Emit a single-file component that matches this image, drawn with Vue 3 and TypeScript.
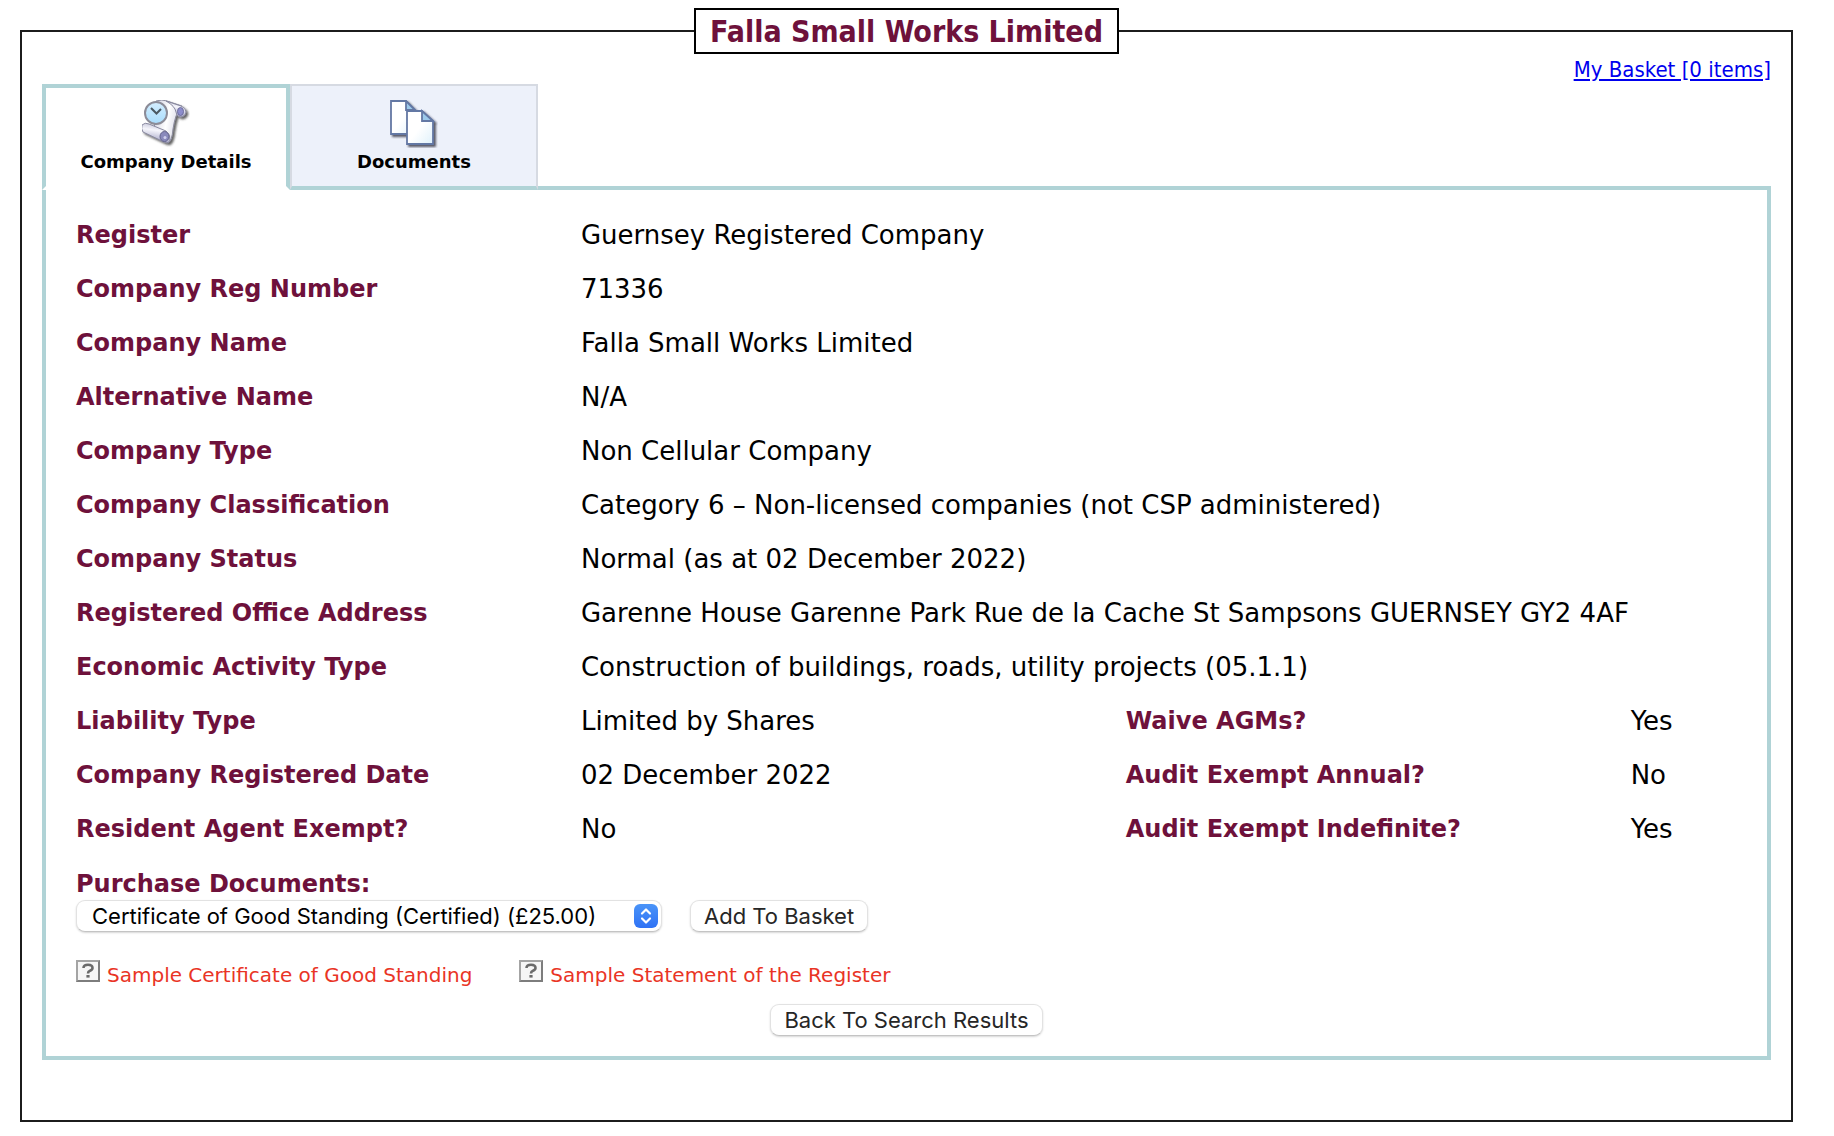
<script setup lang="ts">
import { ref } from 'vue'

interface DetailRow {
  label: string
  value: string
  extra?: { label: string; value: string }
}

const companyName = 'Falla Small Works Limited'

const rows: DetailRow[] = [
  { label: 'Register', value: 'Guernsey Registered Company' },
  { label: 'Company Reg Number', value: '71336' },
  { label: 'Company Name', value: companyName },
  { label: 'Alternative Name', value: 'N/A' },
  { label: 'Company Type', value: 'Non Cellular Company' },
  { label: 'Company Classification', value: 'Category 6 – Non-licensed companies (not CSP administered)' },
  { label: 'Company Status', value: 'Normal (as at 02 December 2022)' },
  { label: 'Registered Office Address', value: 'Garenne House Garenne Park Rue de la Cache St Sampsons GUERNSEY GY2 4AF' },
  { label: 'Economic Activity Type', value: 'Construction of buildings, roads, utility projects (05.1.1)' },
  { label: 'Liability Type', value: 'Limited by Shares', extra: { label: 'Waive AGMs?', value: 'Yes' } },
  { label: 'Company Registered Date', value: '02 December 2022', extra: { label: 'Audit Exempt Annual?', value: 'No' } },
  { label: 'Resident Agent Exempt?', value: 'No', extra: { label: 'Audit Exempt Indefinite?', value: 'Yes' } },
]

const purchaseOptions = ['Certificate of Good Standing (Certified) (£25.00)']
const selected = ref(purchaseOptions[0])

const samples = ['Sample Certificate of Good Standing', 'Sample Statement of the Register']
</script>

<template>
  <main class="page">
    <fieldset class="frame">
      <legend class="title">{{ companyName }}</legend>

      <div class="basket"><a href="#">My Basket [0 items]</a></div>

      <div class="tabs" role="tablist">
        <button class="tab tab-active" type="button" role="tab" aria-selected="true">
          <svg class="tab-icon" viewBox="0 0 48 48" aria-hidden="true">
            <defs>
              <linearGradient id="paper" x1="0" y1="0" x2="1" y2="0.3">
                <stop offset="0" stop-color="#c9c9da" />
                <stop offset="0.55" stop-color="#ffffff" />
                <stop offset="1" stop-color="#d4d4e2" />
              </linearGradient>
              <linearGradient id="roll" x1="0.5" y1="0" x2="0.3" y2="1">
                <stop offset="0" stop-color="#c4c4d8" />
                <stop offset="0.35" stop-color="#f6f6fc" />
                <stop offset="1" stop-color="#9c9cc0" />
              </linearGradient>
              <linearGradient id="glass" x1="0" y1="0" x2="0" y2="1">
                <stop offset="0" stop-color="#d4eeff" />
                <stop offset="1" stop-color="#a8dcfc" />
              </linearGradient>
              <filter id="soft" x="-20%" y="-20%" width="150%" height="150%">
                <feDropShadow dx="2" dy="2" stdDeviation="1.2" flood-color="#333" flood-opacity="0.75" />
              </filter>
            </defs>
            <g filter="url(#soft)">
              <path d="M14 1 Q20 -1 25 1 L40 6 L34 16 Q32 22 31 29 Q30 41 26 43 L12 34 Z" fill="url(#paper)" stroke="#8c8c9e" />
              <path d="M24 1 L39 6 Q44 8 44 12 Q43 17 38 17 Q34 16 34 12 Q33 6 24 1 Z" fill="url(#roll)" stroke="#8a8aa0" />
              <ellipse cx="38.5" cy="11.5" rx="3" ry="4" fill="#8c8ccc" stroke="#6c6c9c" />
              <path d="M0 25 Q3 22 7 24 L24 31 Q29 35 28 40 Q27 44 22 42 L1 32 Q-1 29 0 25 Z" fill="url(#roll)" stroke="#8a8aa0" />
              <ellipse cx="22.5" cy="36.5" rx="4.5" ry="5" fill="#8a8abc" stroke="#62628a" />
              <circle cx="23" cy="37.5" r="1.5" fill="#d0d0ee" />
            </g>
            <circle cx="14" cy="13" r="11" fill="url(#glass)" stroke="#8c8c98" stroke-width="2" />
            <path d="M9 8 L14.5 13.5 L19 9" fill="none" stroke="#4a5862" stroke-width="2" />
          </svg>
          <span>Company Details</span>
        </button>
        <button class="tab" type="button" role="tab" aria-selected="false">
          <svg class="tab-icon" viewBox="0 0 48 48" aria-hidden="true">
            <defs>
              <linearGradient id="sheet" x1="0" y1="0" x2="1" y2="1">
                <stop offset="0" stop-color="#ffffff" />
                <stop offset="0.5" stop-color="#ffffff" />
                <stop offset="1" stop-color="#dff1fb" />
              </linearGradient>
              <filter id="lift" x="-20%" y="-20%" width="150%" height="150%">
                <feDropShadow dx="2" dy="2" stdDeviation="1" flood-color="#223" flood-opacity="0.75" />
              </filter>
            </defs>
            <g filter="url(#lift)" stroke="#6478a4" stroke-width="1.8">
              <path d="M1 1 H16 L25 10 V34 H1 Z" fill="url(#sheet)" />
              <path d="M16 1 V10 H25 Z" fill="#9cc9ea" />
            </g>
            <g filter="url(#lift)" stroke="#6478a4" stroke-width="1.8">
              <path d="M17 11 H32 L43 21 V44 H17 Z" fill="url(#sheet)" />
              <path d="M32 11 V21 H43 Z" fill="#9cc9ea" />
            </g>
          </svg>
          <span>Documents</span>
        </button>
        <div class="tab-rest"></div>
      </div>

      <section class="panel">
        <table class="details">
          <colgroup>
            <col class="col-label" />
            <col class="col-value" />
            <col class="col-label" />
            <col />
          </colgroup>
          <tbody>
            <tr v-for="row in rows" :key="row.label">
              <th scope="row">{{ row.label }}</th>
              <td :colspan="row.extra ? 1 : 3">{{ row.value }}</td>
              <template v-if="row.extra">
                <th scope="row">{{ row.extra.label }}</th>
                <td>{{ row.extra.value }}</td>
              </template>
            </tr>
          </tbody>
        </table>

        <label class="purchase-label" for="purchase">Purchase Documents:</label>
        <div class="purchase">
          <div class="picker">
            <select id="purchase" v-model="selected">
              <option v-for="o in purchaseOptions" :key="o" :value="o">{{ o }}</option>
            </select>
            <svg class="picker-arrows" viewBox="0 0 24 24" aria-hidden="true">
              <defs>
                <linearGradient id="blue" x1="0" y1="0" x2="0" y2="1">
                  <stop offset="0" stop-color="#4a94f8" />
                  <stop offset="1" stop-color="#2f72f5" />
                </linearGradient>
              </defs>
              <rect width="24" height="24" rx="6" fill="url(#blue)" />
              <path d="M8 9.5 L12 5.5 L16 9.5 M8 14.5 L12 18.5 L16 14.5" fill="none" stroke="#fff" stroke-width="2.2" stroke-linecap="round" stroke-linejoin="round" />
            </svg>
          </div>
          <button class="push" type="button">Add To Basket</button>
        </div>

        <div class="samples">
          <a v-for="s in samples" :key="s" class="sample" href="#">
            <svg class="sample-icon" viewBox="0 0 24 22" aria-hidden="true">
              <rect width="24" height="22" fill="#7d7d7d" />
              <path d="M0 0 H24 L22 2 H2 V20 L0 22 Z" fill="#a4a4a4" />
              <rect x="2" y="2" width="20" height="18" fill="#f6f6f6" />
              <path d="M7.5 8 Q7.5 4.8 12 4.8 Q16.5 4.8 16.5 8 Q16.5 9.8 14 10.8 Q12 11.6 12 13.4" fill="none" stroke="#6a6a6a" stroke-width="2.6" />
              <rect x="10.4" y="15" width="3.2" height="2.6" fill="#6a6a6a" />
            </svg>
            <span>{{ s }}</span>
          </a>
        </div>

        <div class="back">
          <button class="push" type="button">Back To Search Results</button>
        </div>
      </section>
    </fieldset>
  </main>
</template>

<style>
body {
  background: #fff;
}
</style>

<style scoped>
.page {
  padding: 8px 41px 14px 20px;
  font-family: "DejaVu Sans", Verdana, sans-serif;
  color: #000;
}

.frame {
  margin: 0;
  padding: 0 20px 60px;
  border: 2px solid #1c1c1c;
  min-width: 0;
}

.title {
  margin: 0 auto;
  padding: 2px 14px 0;
  border: 2px solid #000;
  font: bold 30px/40px "DejaVu Sans Condensed", Tahoma, sans-serif;
  color: #6e113b;
}

.basket {
  padding-top: 2px;
  text-align: right;
  font: 22px/28px "DejaVu Sans Condensed", Tahoma, sans-serif;
}

.basket a {
  color: #0000ee;
}

.tabs {
  display: flex;
}

.tab {
  display: flex;
  flex-direction: column;
  align-items: center;
  box-sizing: border-box;
  width: 248px;
  height: 106px;
  margin: 0;
  padding: 14px 0 0;
  border: 2px solid #d6dae2;
  border-bottom: 4px solid #b0d3d6;
  border-radius: 0;
  background: #edf1fa;
  color: #000;
  font: bold 18px/28px "DejaVu Sans", Verdana, sans-serif;
}

.tab-active {
  padding-top: 12px;
  border: 4px solid #b0d3d6;
  border-bottom-color: #fff;
  background: #fff;
}

.tab-icon {
  width: 48px;
  height: 48px;
}

.tab-rest {
  flex: 1;
  border-bottom: 4px solid #b0d3d6;
}

.panel {
  padding: 18px 30px 20px;
  border: 4px solid #b0d3d6;
  border-top: 0;
}

.details {
  width: 100%;
  table-layout: fixed;
  border-collapse: collapse;
}

.col-label {
  width: 30.4%;
}

.col-value {
  width: 32.8%;
}

.details th,
.details td {
  padding: 0;
  text-align: left;
  vertical-align: middle;
  line-height: 54px;
}

.details th {
  font-size: 24px;
  font-weight: bold;
  color: #6e113b;
}

.details td {
  font-size: 26px;
}

.purchase-label {
  display: block;
  padding-top: 12px;
  font-size: 24px;
  line-height: 32px;
  font-weight: bold;
  color: #6e113b;
}

.purchase {
  display: flex;
  align-items: center;
  gap: 28px;
}

.picker {
  position: relative;
}

.picker select,
.push {
  display: block;
  box-sizing: border-box;
  height: 32px;
  margin: 0;
  border: 1px solid #e2e2e2;
  border-bottom-color: #c4c4c4;
  border-radius: 9px;
  background: #fff;
  box-shadow: 0 1px 2px rgba(0, 0, 0, 0.16);
  font: 22px/28px Inter, sans-serif;
}

.picker select {
  appearance: none;
  padding: 0 64px 0 15px;
  color: #000;
}

.picker-arrows {
  position: absolute;
  top: 4px;
  right: 4px;
  width: 24px;
  height: 24px;
  pointer-events: none;
}

.push {
  padding: 0 13px;
  color: #262626;
}

.samples {
  display: flex;
  gap: 47px;
  margin-top: 28px;
}

.sample {
  display: flex;
  align-items: flex-start;
  gap: 7px;
  color: #e93425;
  font-size: 20px;
  line-height: 30px;
  text-decoration: none;
}

.sample-icon {
  width: 24px;
  height: 22px;
}

.back {
  display: flex;
  justify-content: center;
  margin-top: 14px;
}
</style>
